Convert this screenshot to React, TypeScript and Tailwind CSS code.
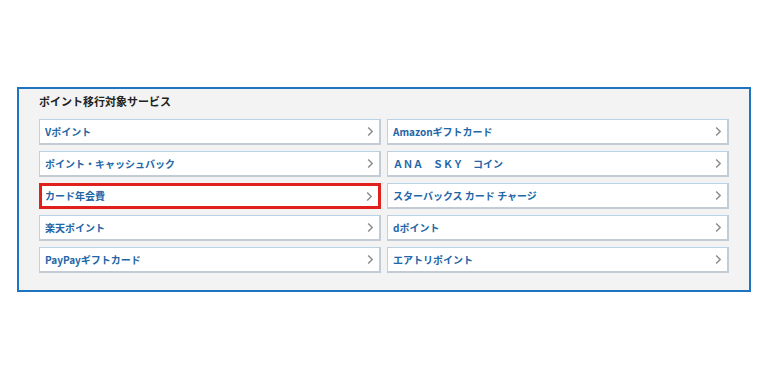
import { Fragment } from 'react';

const services: [string, string][] = [
  ['Vポイント', 'Amazonギフトカード'],
  ['ポイント・キャッシュバック', 'ＡＮＡ　ＳＫＹ　コイン'],
  ['カード年会費', 'スターバックス カード チャージ'],
  ['楽天ポイント', 'dポイント'],
  ['PayPayギフトカード', 'エアトリポイント'],
];

function Chevron() {
  return (
    <svg width="7" height="11" viewBox="0 0 7 11" className="shrink-0">
      <path d="M1.2 1.5 L5.2 5.5 L1.2 9.5" fill="none" stroke="#8a8a8a" strokeWidth="1.4" />
    </svg>
  );
}

function ServiceButton({ label, highlight }: { label: string; highlight?: boolean }) {
  return (
    <div
      className={
        highlight
          ? 'flex h-[26px] items-center justify-between border-[3px] border-[#e0201c] bg-white pl-[3px] pr-[5px]'
          : 'flex h-[26px] items-center justify-between border border-[#b8d3e6] border-b-2 border-r-2 border-b-[#c3ccd4] border-r-[#c3ccd4] bg-white pl-[5px] pr-[5px]'
      }
    >
      <span className="text-[10px] font-bold leading-none text-[#2266a8]">{label}</span>
      <Chevron />
    </div>
  );
}

export default function App() {
  return (
    <div
      className="h-[380px] w-[768px] bg-white pt-[87px] pl-[17px]"
      style={{ fontFamily: '"Noto Sans CJK JP", "Noto Sans", sans-serif' }}
    >
      <div className="h-[205px] w-[734px] border-2 border-[#1e74bf] bg-[#f3f3f3] px-[20px] pt-[5px]">
        <h2 className="text-[11px] font-bold leading-[14px] text-[#222]">ポイント移行対象サービス</h2>
        <div className="mt-[11px] grid grid-cols-2 gap-x-[6px] gap-y-[6px]">
          {services.map(([l, r]) => (
            <Fragment key={l}>
              <ServiceButton label={l} highlight={l === 'カード年会費'} />
              <ServiceButton label={r} />
            </Fragment>
          ))}
        </div>
      </div>
    </div>
  );
}
